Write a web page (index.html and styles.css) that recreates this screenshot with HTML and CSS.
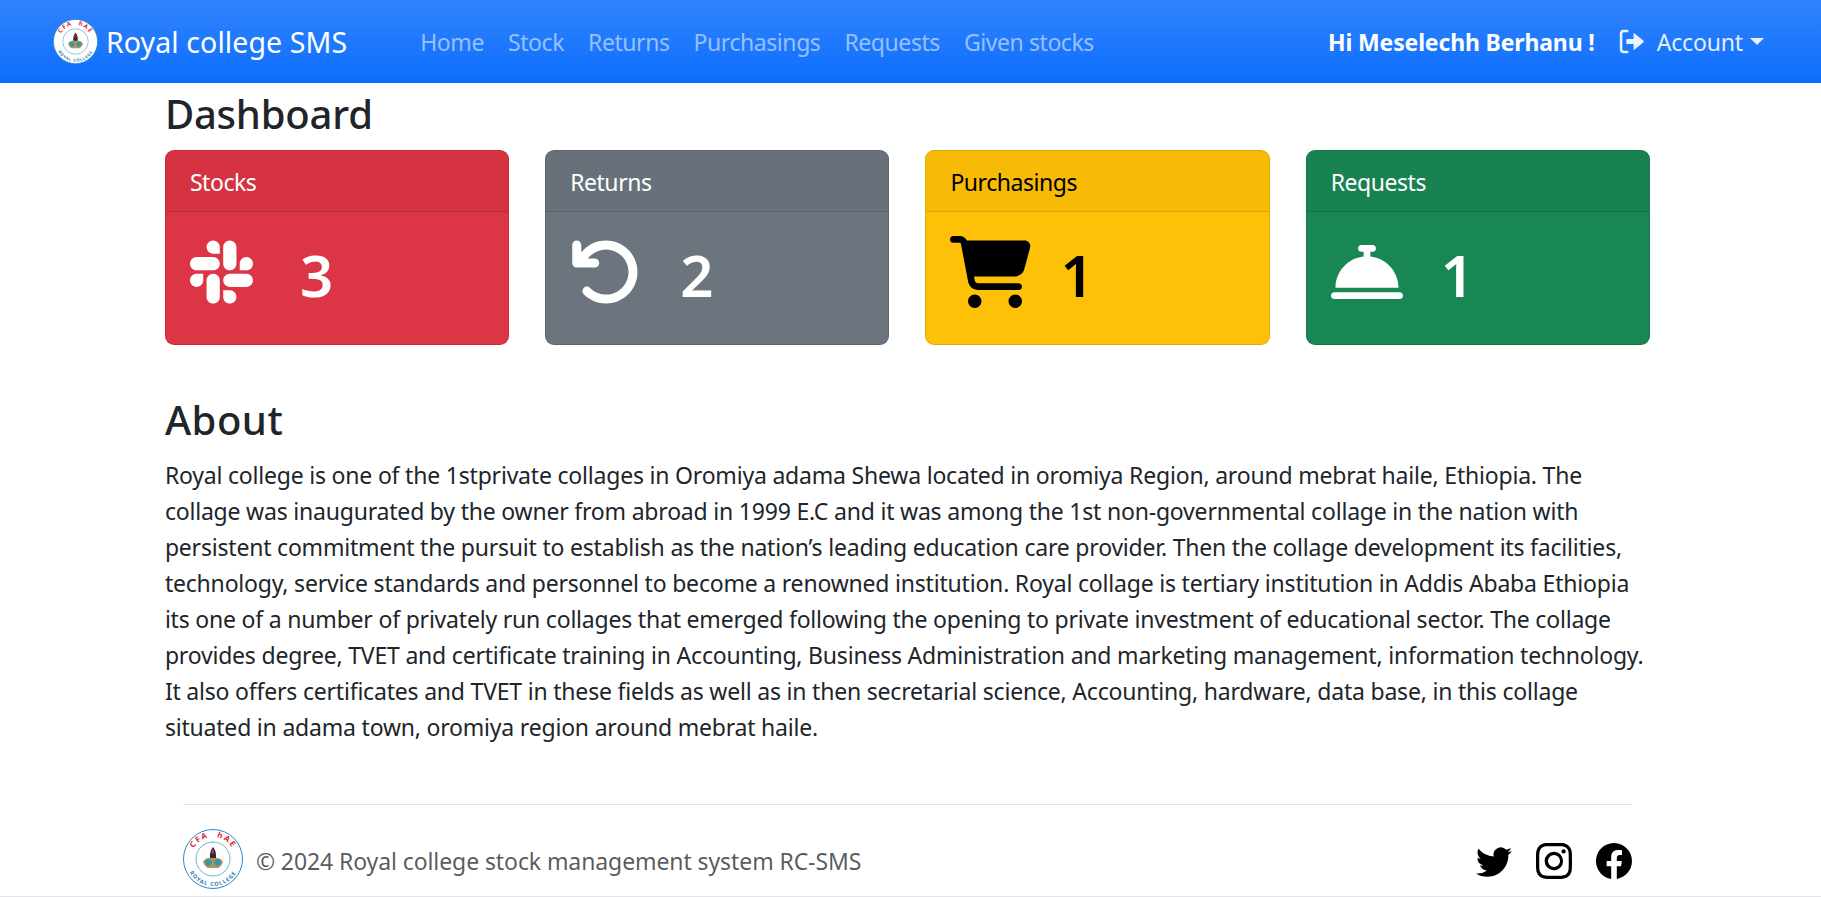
FILE: index.html
```html
<!DOCTYPE html>
<html lang="en">
	<head>
		<meta charset="UTF-8" />
		<meta name="viewport" content="width=device-width, initial-scale=1.0" />
		<title>Royal college SMS</title>
		<link rel="stylesheet" href="styles.css">
	</head>
	<body>
		<svg class="sprite" aria-hidden="true">
			<path id="logo-top" d="M8 30a22 22 0 0 1 44 0" fill="none" />
			<path id="logo-bottom" d="M3 30a27 27 0 0 0 54 0" fill="none" />
			<symbol id="logo-art" viewBox="0 0 60 60">
				<circle cx="30" cy="30" r="29.500" fill="#fff" stroke="#2a86c8" stroke-width="1" />
				<circle cx="30" cy="30" r="17" fill="#fff" stroke="#6fb3cf" stroke-width="1" />
				<path d="M20 33q2-4 6-4l4-1 4 1q4 0 6 4-2 5-5 6H25q-3-1-5-6z" fill="#b98f5a" />
				<path d="M30 18q3.500 4 3 11h-6q-.5-7 3-11z" fill="#2b2b33" />
				<path d="M29.500 19.500q1.500 1.500 1.500 5h-2.500q0-3 1-5z" fill="#d0245a" />
				<circle cx="25.500" cy="33.500" r="3.200" fill="#2b9aa8" />
				<circle cx="34.500" cy="33.500" r="3.200" fill="#2b9aa8" />
			</symbol>
		</svg>

		<nav class="navbar">
			<a class="brand" href="#">
				<svg class="brand-logo" viewBox="0 0 60 60">
					<use href="#logo-art" width="60" height="60" />
					<text class="logo-top-text"><textPath href="#logo-top" startOffset="50%" text-anchor="middle">CFA hAE</textPath></text>
					<text class="logo-bottom-text"><textPath href="#logo-bottom" startOffset="50%" text-anchor="middle">ROYAL COLLEGE</textPath></text>
				</svg>
				Royal college SMS
			</a>
			<ul class="nav-links">
				<li><a href="#">Home</a></li>
				<li><a href="#">Stock</a></li>
				<li><a href="#">Returns</a></li>
				<li><a href="#">Purchasings</a></li>
				<li><a href="#">Requests</a></li>
				<li><a href="#">Given stocks</a></li>
			</ul>
			<div class="nav-user">
				<strong class="greeting">Hi Meselechh Berhanu !</strong>
				<a class="account" href="#">
					<svg class="account-icon" viewBox="0 0 25 24">
						<path d="M8 2H4.500Q2 2 2 4.500v15Q2 22 4.500 22H8" fill="none" stroke="currentColor" stroke-width="2.400" stroke-linecap="round" />
						<path d="M8 9.500h6V4.500q0-1 1-.3l8.500 7q.8.800 0 1.600l-8.500 7q-1 .7-1-.3v-5H8q-1 0-1-1v-3q0-1 1-1z" fill="currentColor" />
					</svg>
					Account
					<span class="caret"></span>
				</a>
			</div>
		</nav>

		<main class="container">
			<h3 class="page-title">Dashboard</h3>
			<div class="cards">
				<div class="card card-red">
					<div class="card-header">Stocks</div>
					<div class="card-body">
						<div class="icon-cell"><svg class="card-icon" viewBox="0 0 448 512"><path d="M94.120 315.100c0 25.900-21.160 47.060-47.060 47.060S0 341 0 315.100c0-25.900 21.160-47.060 47.060-47.060h47.060v47.060zm23.720 0c0-25.900 21.160-47.060 47.060-47.060s47.060 21.160 47.060 47.060v117.840c0 25.900-21.160 47.060-47.060 47.060s-47.060-21.160-47.060-47.060V315.100zm47.060-188.980c-25.900 0-47.060-21.160-47.060-47.060S139 32 164.900 32s47.060 21.160 47.060 47.060v47.060H164.900zm0 23.720c25.900 0 47.060 21.160 47.060 47.060s-21.160 47.060-47.060 47.060H47.060C21.160 243.960 0 222.800 0 196.900s21.160-47.060 47.060-47.060H164.900zm188.980 47.060c0-25.900 21.160-47.060 47.060-47.060 25.900 0 47.060 21.160 47.060 47.060s-21.160 47.060-47.060 47.060h-47.060V196.900zm-23.720 0c0 25.900-21.160 47.060-47.060 47.060-25.900 0-47.060-21.160-47.060-47.060V79.060c0-25.900 21.160-47.060 47.060-47.060 25.900 0 47.060 21.160 47.060 47.060V196.900zM283.100 385.880c25.900 0 47.060 21.160 47.060 47.060 0 25.900-21.160 47.060-47.060 47.060-25.900 0-47.060-21.160-47.060-47.060v-47.060h47.060zm0-23.720c-25.900 0-47.060-21.160-47.060-47.060 0-25.900 21.160-47.060 47.060-47.060h117.840c25.900 0 47.060 21.160 47.060 47.060 0 25.900-21.160 47.060-47.060 47.060H283.100z" /></svg></div>
						<h1>3</h1>
					</div>
				</div>
				<div class="card card-gray">
					<div class="card-header">Returns</div>
					<div class="card-body">
						<div class="icon-cell"><svg class="card-icon" viewBox="0 0 512 512"><path d="M125.700 160H176c17.700 0 32 14.300 32 32s-14.300 32-32 32H48c-17.700 0-32-14.300-32-32V64c0-17.700 14.300-32 32-32s32 14.300 32 32v51.200L97.600 97.600c87.500-87.500 229.300-87.500 316.800 0s87.500 229.300 0 316.800s-229.300 87.500-316.800 0c-12.500-12.500-12.500-32.800 0-45.300s32.800-12.500 45.300 0c62.500 62.500 163.800 62.500 226.300 0s62.500-163.800 0-226.300s-163.800-62.500-226.300 0L125.700 160z" /></svg></div>
						<h1>2</h1>
					</div>
				</div>
				<div class="card card-yellow">
					<div class="card-header">Purchasings</div>
					<div class="card-body">
						<div class="icon-cell"><svg class="card-icon" viewBox="0 0 576 512"><path d="M0 24C0 10.700 10.700 0 24 0H69.500c22 0 41.500 12.800 50.600 32h411c26.300 0 45.500 25 38.600 50.400l-41 152.300c-8.500 31.400-37 53.300-69.500 53.300H170.700l5.400 28.500c2.200 11.300 12.100 19.500 23.600 19.500H488c13.300 0 24 10.700 24 24s-10.700 24-24 24H199.700c-34.600 0-64.300-24.600-70.700-58.500L77.400 54.500c-.7-3.800-4-6.500-7.900-6.500H24C10.700 48 0 37.300 0 24zM128 464a48 48 0 1 1 96 0 48 48 0 1 1 -96 0zm336-48a48 48 0 1 1 0 96 48 48 0 1 1 0-96z" /></svg></div>
						<h1>1</h1>
					</div>
				</div>
				<div class="card card-green">
					<div class="card-header">Requests</div>
					<div class="card-body">
						<div class="icon-cell"><svg class="card-icon" viewBox="0 0 512 512"><path d="M216 64c-13.300 0-24 10.700-24 24s10.700 24 24 24h16v33.300C119.600 157.200 32 252.400 32 368H480c0-115.600-87.600-210.800-200-222.700V112h16c13.300 0 24-10.700 24-24s-10.700-24-24-24H256 216zM24 400c-13.300 0-24 10.700-24 24s10.700 24 24 24H488c13.300 0 24-10.700 24-24s-10.700-24-24-24H24z" /></svg></div>
						<h1>1</h1>
					</div>
				</div>
			</div>

			<section class="about">
				<h3 class="about-title">About</h3>
				<p>Royal college is one of the 1stprivate collages in Oromiya adama Shewa located in oromiya Region, around mebrat haile, Ethiopia. The collage was inaugurated by the owner from abroad in 1999 E.C and it was among the 1st non-governmental collage in the nation with persistent commitment the pursuit to establish as the nation’s leading education care provider. Then the collage development its facilities, technology, service standards and personnel to become a renowned institution. Royal collage is tertiary institution in Addis Ababa Ethiopia its one of a number of privately run collages that emerged following the opening to private investment of educational sector. The collage provides degree, TVET and certificate training in Accounting, Business Administration and marketing management, information technology. It also offers certificates and TVET in these fields as well as in then secretarial science, Accounting, hardware, data base, in this collage situated in adama town, oromiya region around mebrat haile.</p>
			</section>

			<footer class="footer">
				<div class="footer-left">
					<svg class="footer-logo" viewBox="0 0 60 60">
						<use href="#logo-art" width="60" height="60" />
						<text class="logo-top-text"><textPath href="#logo-top" startOffset="50%" text-anchor="middle">CFA hAE</textPath></text>
						<text class="logo-bottom-text"><textPath href="#logo-bottom" startOffset="50%" text-anchor="middle">ROYAL COLLEGE</textPath></text>
					</svg>
					<span class="copyright">© 2024 Royal college stock management system RC-SMS</span>
				</div>
				<div class="socials">
					<a href="#"><svg viewBox="0 0 16 16"><path d="M5.026 15c6.038 0 9.341-5.003 9.341-9.334 0-.14 0-.282-.006-.422A6.685 6.685 0 0 0 16 3.542a6.658 6.658 0 0 1-1.889.518 3.301 3.301 0 0 0 1.447-1.817 6.533 6.533 0 0 1-2.087.793A3.286 3.286 0 0 0 7.875 6.030a9.325 9.325 0 0 1-6.767-3.429 3.289 3.289 0 0 0 1.018 4.382A3.323 3.323 0 0 1 .64 6.575v.045a3.288 3.288 0 0 0 2.632 3.218 3.203 3.203 0 0 1-.865.115 3.230 3.230 0 0 1-.614-.057 3.283 3.283 0 0 0 3.067 2.277A6.588 6.588 0 0 1 .78 13.580a6.320 6.320 0 0 1-.78-.045A9.344 9.344 0 0 0 5.026 15z" /></svg></a>
					<a href="#"><svg viewBox="0 0 16 16"><path d="M8 0C5.829 0 5.556.01 4.703.048 3.850.088 3.269.222 2.760.42a3.917 3.917 0 0 0-1.417.923A3.927 3.927 0 0 0 .42 2.760C.222 3.268.087 3.850.048 4.700.01 5.555 0 5.827 0 8.001c0 2.172.01 2.444.048 3.297.04.852.174 1.433.372 1.942.205.526.478.972.923 1.417.444.445.89.719 1.416.923.51.198 1.090.333 1.942.372C5.555 15.990 5.827 16 8 16s2.444-.01 3.298-.048c.851-.04 1.434-.174 1.943-.372a3.916 3.916 0 0 0 1.416-.923c.445-.445.718-.891.923-1.417.197-.509.332-1.090.372-1.942C15.990 10.445 16 10.173 16 8s-.01-2.445-.048-3.299c-.04-.851-.175-1.433-.372-1.941a3.926 3.926 0 0 0-.923-1.417A3.911 3.911 0 0 0 13.240.42c-.51-.198-1.092-.333-1.943-.372C10.443.01 10.172 0 7.998 0h.003zm-.717 1.442h.718c2.136 0 2.389.007 3.232.046.78.035 1.204.166 1.486.275.373.145.64.319.92.599.28.28.453.546.598.92.11.281.24.705.275 1.485.039.843.047 1.096.047 3.231s-.008 2.389-.047 3.232c-.035.78-.166 1.203-.275 1.485a2.470 2.470 0 0 1-.599.919c-.28.28-.546.453-.92.598-.28.11-.704.24-1.485.276-.843.038-1.096.047-3.232.047s-2.390-.009-3.233-.047c-.78-.036-1.203-.166-1.485-.276a2.478 2.478 0 0 1-.92-.598 2.480 2.480 0 0 1-.6-.92c-.109-.281-.24-.705-.275-1.485-.038-.843-.046-1.096-.046-3.233 0-2.136.008-2.388.046-3.231.036-.78.166-1.204.276-1.486.145-.373.319-.64.599-.92.28-.28.546-.453.92-.598.282-.11.705-.24 1.485-.276.738-.034 1.024-.044 2.515-.045v.002zm4.988 1.328a.96.96 0 1 0 0 1.920.96.96 0 0 0 0-1.920zm-4.270 1.122a4.109 4.109 0 1 0 0 8.217 4.109 4.109 0 0 0 0-8.217zm0 1.441a2.667 2.667 0 1 1 0 5.334 2.667 2.667 0 0 1 0-5.334z" /></svg></a>
					<a href="#"><svg viewBox="0 0 16 16"><path d="M16 8.049c0-4.446-3.582-8.050-8-8.050C3.580 0-.002 3.603-.002 8.050c0 4.017 2.926 7.347 6.750 7.951v-5.625h-2.030V8.050H6.750V6.275c0-2.017 1.195-3.131 3.022-3.131.876 0 1.791.157 1.791.157v1.980h-1.009c-.993 0-1.303.621-1.303 1.258v1.510h2.218l-.354 2.326H9.250V16c3.824-.604 6.750-3.934 6.750-7.951z" /></svg></a>
				</div>
			</footer>
		</main>
	</body>
</html>
```

FILE: styles.css
```css
* {
	margin: 0;
	padding: 0;
	box-sizing: border-box;
}

body {
	font-family: "Noto Sans", "Open Sans", sans-serif;
	font-size: 23px;
	line-height: 36px;
	color: #212529;
	background-color: #fff;
	min-height: 897px;
	border-bottom: 1px solid #e4e4e8;
}

a {
	color: inherit;
	text-decoration: none;
}

.sprite {
	position: absolute;
	width: 0;
	height: 0;
}

.logo-top-text {
	font-size: 8px;
	font-weight: 700;
	letter-spacing: 1.5px;
	word-spacing: 4px;
	fill: #e0262e;
}

.logo-bottom-text {
	font-size: 5.5px;
	font-weight: 700;
	letter-spacing: 1px;
	fill: #2a7fb8;
}

/* navbar */
.navbar {
	display: flex;
	align-items: center;
	height: 83px;
	padding: 0 57px 0 53px;
	background: #0d6efd linear-gradient(180deg, rgba(255, 255, 255, 0.15), rgba(255, 255, 255, 0));
	color: #fff;
}

.brand {
	display: flex;
	align-items: center;
	gap: 8px;
	font-size: 28.5px;
	letter-spacing: 0.1px;
	white-space: nowrap;
}

.brand-logo {
	width: 45px;
	height: 45px;
}

.nav-links {
	display: flex;
	list-style: none;
	margin-left: 61px;
}

.nav-links a {
	display: block;
	padding: 0 12px;
	color: rgba(255, 255, 255, 0.55);
	letter-spacing: -0.43px;
}

.nav-user {
	display: flex;
	align-items: center;
	margin-left: auto;
	gap: 24px;
}

.greeting {
	font-weight: 700;
	letter-spacing: -0.15px;
}

.account {
	display: flex;
	align-items: center;
	gap: 12px;
	color: rgba(255, 255, 255, 0.9);
	letter-spacing: -0.15px;
}

.account-icon {
	width: 26px;
	height: 25px;
}

.caret {
	width: 0;
	height: 0;
	margin-left: -5px;
	border-top: 7px solid currentColor;
	border-left: 7px solid transparent;
	border-right: 7px solid transparent;
}

/* main */
.container {
	width: 1485px;
	margin-left: 164.9px;
}

h3 {
	font-size: 40px;
	font-weight: 500;
	line-height: 50px;
}

.page-title {
	margin: 6px 0 11px;
	letter-spacing: -0.2px;
}

.cards {
	display: grid;
	grid-template-columns: repeat(4, 1fr);
	gap: 36px;
}

.card {
	border: 1px solid rgba(0, 0, 0, 0.125);
	border-radius: 9px;
	overflow: hidden;
	color: #fff;
}

.card-red {
	background: #dc3545;
}

.card-gray {
	background: #6c757d;
}

.card-yellow {
	background: #ffc107;
	color: #000;
}

.card-green {
	background: #198754;
}

.card-header {
	height: 61px;
	padding: 13px 24px 11px;
	background: rgba(0, 0, 0, 0.03);
	border-bottom: 1px solid rgba(0, 0, 0, 0.125);
	letter-spacing: -0.45px;
}

.card-body {
	display: flex;
	align-items: flex-start;
	height: 132px;
	padding: 24px;
}

.icon-cell {
	width: 110px;
	flex: none;
}

.card-icon {
	display: block;
	height: 72px;
	fill: currentColor;
}

h1 {
	font-size: 58px;
	font-weight: 600;
	line-height: 72px;
	padding-top: 3px;
}

.about {
	margin-top: 50px;
}

.about-title {
	margin-bottom: 12px;
	letter-spacing: 0.5px;
}

.about p {
	letter-spacing: -0.2px;
}

/* footer */
.footer {
	display: flex;
	align-items: center;
	justify-content: space-between;
	width: 1449px;
	margin: 59px 0 0 18px;
	padding: 24px 0 6px;
	border-top: 1px solid #dee2e6;
	color: rgba(33, 37, 41, 0.75);
}

.footer-left {
	display: flex;
	align-items: center;
	gap: 13px;
	letter-spacing: -0.09px;
}

.copyright {
	margin-top: 3px;
}

.footer-logo {
	width: 60px;
	height: 60px;
}

.socials {
	display: flex;
	gap: 24px;
	margin-top: 4px;
}

.socials a {
	display: flex;
}

.socials svg {
	width: 36px;
	height: 36px;
	fill: #000;
}
```
